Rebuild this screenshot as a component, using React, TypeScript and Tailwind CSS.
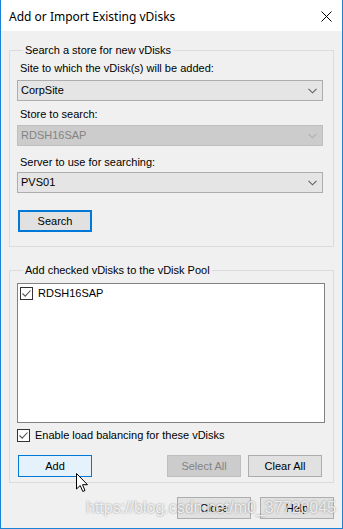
import React from 'react';

const Chevron: React.FC<{ color?: string }> = ({ color = '#606060' }) => (
  <svg width="9" height="6" viewBox="0 0 9 6" className="shrink-0">
    <path d="M0.5 0.8 L4.5 4.8 L8.5 0.8" fill="none" stroke={color} strokeWidth="1.1" />
  </svg>
);

const Combo: React.FC<{ value: string; disabled?: boolean }> = ({ value, disabled }) => (
  <div
    className={
      'w-[306px] h-[21px] flex items-center justify-between pl-[3px] pr-[5px] border ' +
      (disabled ? 'bg-[#cccccc] border-[#bfbfbf] text-[#838383]' : 'bg-[#e5e5e5] border-[#adadad] text-black')
    }
  >
    <span>{value}</span>
    <Chevron color={disabled ? '#b0b0b0' : '#606060'} />
  </div>
);

const CheckBox: React.FC = () => (
  <div className="w-[13px] h-[13px] border border-[#333333] bg-white flex items-center justify-center shrink-0">
    <svg width="11" height="11" viewBox="0 0 11 11">
      <path d="M1.5 5.5 L4.2 8.2 L9.5 2.5" fill="none" stroke="#555555" strokeWidth="1.1" />
    </svg>
  </div>
);

const Button: React.FC<{ label: string; variant?: 'normal' | 'focus' | 'hover' | 'disabled' }> = ({ label, variant = 'normal' }) => {
  const styles = {
    normal: 'bg-[#e1e1e1] border border-[#adadad] text-black',
    focus: 'bg-[#e1e1e1] border-2 border-[#0078d7] text-black',
    hover: 'bg-[#e5f1fb] border border-[#0078d7] text-black',
    disabled: 'bg-[#cccccc] border border-[#bfbfbf] text-[#838383]',
  }[variant];
  return <div className={'w-[74px] h-[22px] flex items-center justify-center shrink-0 ' + styles}>{label}</div>;
};

export default function App() {
  return (
    <div className="relative w-[343px] h-[529px] bg-[#f0f0f0] border-x border-b border-[#1883d7] flex flex-col font-['Liberation_Sans',Arial,sans-serif] text-[11px] leading-[13px] text-black overflow-hidden">
      {/* title bar */}
      <div className="h-[31px] bg-white flex items-center justify-between pl-[8px] pr-[10px] shrink-0">
        <span className="font-['Noto_Sans',sans-serif] text-[12px] leading-[16px] mt-[2px]">Add or Import Existing vDisks</span>
        <svg width="11" height="11" viewBox="0 0 11 11" className="mt-[1px]">
          <path d="M0.5 0.5 L10.5 10.5 M10.5 0.5 L0.5 10.5" stroke="#000" strokeWidth="1" />
        </svg>
      </div>

      <div className="flex flex-col px-[8px]">
        {/* search group */}
        <fieldset className="mt-[13px] border border-[#dcdcdc] h-[203px] pl-[7px] flex flex-col">
          <legend className="ml-[6px] px-[2px]">Search a store for new vDisks</legend>
          <div className="mt-[5px] pl-[3px]">Site to which the vDisk(s) will be added:</div>
          <div className="mt-[5px]"><Combo value="CorpSite" /></div>
          <div className="mt-[7px] pl-[3px]">Store to search:</div>
          <div className="mt-[4px]"><Combo value="RDSH16SAP" disabled /></div>
          <div className="mt-[10px] pl-[3px]">Server to use for searching:</div>
          <div className="mt-[3px]"><Combo value="PVS01" /></div>
          <div className="mt-[17px] pl-[1px]"><Button label="Search" variant="focus" /></div>
        </fieldset>

        {/* vdisk pool group */}
        <fieldset className="mt-[17px] border border-[#dcdcdc] h-[219px] pl-[7px] flex flex-col">
          <legend className="ml-[6px] px-[2px]">Add checked vDisks to the vDisk Pool</legend>
          <div className="mt-[6px] w-[308px] h-[140px] bg-white border border-[#828282] pt-[3px] pl-[2px]">
            <div className="flex items-center gap-[5px]">
              <CheckBox />
              <span>RDSH16SAP</span>
            </div>
          </div>
          <div className="mt-[6px] flex items-center gap-[5px]">
            <CheckBox />
            <span>Enable load balancing for these vDisks</span>
          </div>
          <div className="mt-[13px] flex items-center pl-[1px]">
            <Button label="Add" variant="hover" />
            <div className="ml-[75px]"><Button label="Select All" variant="disabled" /></div>
            <div className="ml-[7px]"><Button label="Clear All" /></div>
          </div>
        </fieldset>

        <div className="mt-[14px] flex justify-end gap-[9px]">
          <Button label="Close" />
          <Button label="Help" />
        </div>
      </div>

      {/* mouse pointer */}
      <svg width="13" height="20" viewBox="0 0 13 20" className="absolute left-[75px] top-[473px]">
        <path d="M0.5 0.5 L0.5 16 L4.2 12.5 L6.8 18.5 L9 17.5 L6.5 11.7 L11.5 11.7 Z" fill="#fff" stroke="#000" strokeWidth="1" strokeLinejoin="miter" />
      </svg>

      {/* watermark */}
      <div className="absolute left-[85px] top-[499px] font-['Liberation_Sans',Arial,sans-serif] text-[16px] leading-[18px] text-white/80 [text-shadow:0_0_2px_rgba(0,0,0,0.45)] pointer-events-none">
        https://blog.csdn.net/m0_37720045
      </div>
    </div>
  );
}
